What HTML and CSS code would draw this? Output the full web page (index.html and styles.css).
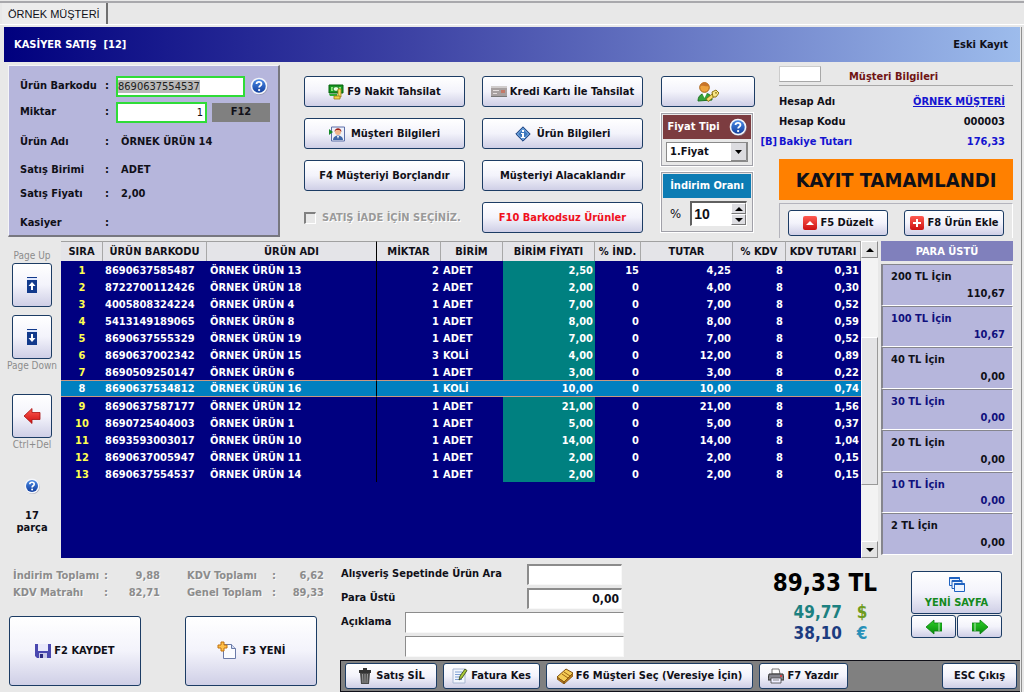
FILE: index.html
```html
<!DOCTYPE html>
<html lang="tr">
<head>
<meta charset="utf-8">
<title>Kasiyer Satış</title>
<link rel="stylesheet" href="styles.css">
</head>
<body>
<svg class="defs" aria-hidden="true">
  <defs>
    <linearGradient id="gBlue" x1="0" y1="0" x2="0" y2="1"><stop offset="0" stop-color="#4b8be6"/><stop offset="1" stop-color="#123f9e"/></linearGradient>
    <linearGradient id="gRed" x1="0" y1="0" x2="0" y2="1"><stop offset="0" stop-color="#ff5a50"/><stop offset="1" stop-color="#cc1010"/></linearGradient>
    <linearGradient id="gGreen" x1="0" y1="0" x2="0" y2="1"><stop offset="0" stop-color="#2cd028"/><stop offset="1" stop-color="#088a0c"/></linearGradient>
    <symbol id="help" viewBox="0 0 16 16"><circle cx="8.6" cy="8.8" r="7.2" fill="#8c8ca0" opacity=".6"/><circle cx="8" cy="8" r="7.4" fill="#f4f6fb"/><circle cx="8" cy="8" r="6" fill="url(#gBlue)"/><path d="M5.8 6.3C5.8 3.6 10.2 3.7 10.2 6.2C10.2 7.8 8.1 7.7 8.1 9.4" fill="none" stroke="#fff" stroke-width="1.6"/><circle cx="8.1" cy="11.6" r="1" fill="#fff"/></symbol>
  </defs>
</svg>
<nav class="tabs"><button class="tab" type="button">ÖRNEK MÜŞTERİ</button></nav>
<div class="window">
  <header class="title"><h1>KASİYER SATIŞ&nbsp; [12]</h1><span>Eski Kayıt</span></header>

  <section class="top">
    <form class="entry">
      <label for="barcode">Ürün Barkodu</label><i>:</i>
      <div class="line"><input id="barcode" class="green barcode" value="8690637554537"><svg class="i18"><use href="#help"/></svg></div>
      <label for="qty">Miktar</label><i>:</i>
      <div class="line"><input id="qty" class="green qty" value="1"><button type="button" class="f12">F12</button></div>
      <span>Ürün Adı</span><i>:</i><output>ÖRNEK ÜRÜN 14</output>
      <span>Satış Birimi</span><i>:</i><output>ADET</output>
      <span>Satış Fiyatı</span><i>:</i><output>2,00</output>
      <span>Kasiyer</span><i>:</i><output></output>
    </form>

    <div class="actions">
      <button type="button" class="btn"><svg class="i16" viewBox="0 0 16 16"><path d="M1 1h14v8H1z" fill="#159a20" stroke="#07600d"/><path d="M3 3h10v4H3z" fill="#8be67c"/><ellipse cx="8" cy="5" rx="3" ry="2.4" fill="#eaffdf" stroke="#0b7a14"/><path d="M1 10h8v2H2z" fill="#2cae32"/><path d="M10 5h3v8h-3z" fill="#f2dd65" stroke="#9c7a10" stroke-width=".8"/><path d="M6 12h6v3H6z" fill="#f0d24c" stroke="#9c7a10" stroke-width=".8"/></svg>F9 Nakit Tahsilat</button>
      <button type="button" class="btn"><svg class="i16" viewBox="0 0 16 16"><path d="M0 2h16v11H0z" fill="#a7a0a0"/><path d="M0 2h16v2H0z" fill="#d0cccc"/><path d="M2 6h6v1H2zM2 9h4v1H2z" fill="#e4dede"/><path d="M10 6h4v3h-4z" fill="#c47868"/><path d="M0 12h16v1H0z" fill="#777"/></svg>Kredi Kartı İle Tahsilat</button>
      <button type="button" class="btn wide"><svg class="i16" viewBox="0 0 16 16"><path d="M2.5 1h13v14h-13z" fill="#eef1fa" stroke="#5c6fa8"/><circle cx="9" cy="6" r="3" fill="#f0b48c"/><path d="M5.500 6c0-5 7-5 7 0l-2-2H7z" fill="#a02018"/><path d="M4 14c0-6 10-6 10 0z" fill="#3f66a8"/><path d="M8 10h2l-1 3z" fill="#fff"/><path d="M0 3l4 3-4 3z" fill="#168a28"/></svg>Müşteri Bilgileri</button>
      <button type="button" class="btn wide"><svg class="i16" viewBox="0 0 16 16"><path d="M8 .8L15.2 8 8 15.2.8 8z" fill="#3c78be" stroke="#1b3f7c"/><path d="M8 2.5L13.5 8 8 13.5 2.5 8z" fill="none" stroke="#9cc4ee" stroke-width=".8"/><path d="M7 4h2v2H7zM6 7h3v4h1v1H6v-1h1V8H6z" fill="#fff"/></svg>Ürün Bilgileri</button>
      <button type="button" class="btn">F4 Müşteriyi Borçlandır</button>
      <button type="button" class="btn">Müşteriyi Alacaklandır</button>
      <label class="refund"><input type="checkbox" disabled>SATIŞ İADE İÇİN SEÇİNİZ.</label>
      <button type="button" class="btn red">F10 Barkodsuz Ürünler</button>
    </div>

    <div class="pricing">
      <button type="button" class="btn" aria-label="Kullanıcı yetkisi"><svg class="i22" viewBox="0 0 22 22"><path d="M1 20c0-10 14-10 14-1z" fill="#37a238" stroke="#1d7422"/><path d="M5 12l2.500 5 2.500-5z" fill="#fff"/><circle cx="7.500" cy="6.500" r="4.800" fill="#eda23d" stroke="#a85f12"/><path d="M3 5C4.500 0 10.500 0 12 5 8.500 6 6.500 4 3 5z" fill="#c8752a"/><path d="M10 19.500l7-6" stroke="#8d7312" stroke-width="4"/><path d="M10.500 19l6-5" stroke="#f6dc6c" stroke-width="2.400"/><path d="M15 11l4-2 3 3-3 4h-3z" fill="#f9e688" stroke="#8d7312"/><circle cx="19" cy="11.800" r=".9" fill="#8d7312"/></svg></button>
      <div class="box brown">
        <label for="ptype">Fiyat Tipi<svg class="i18"><use href="#help"/></svg></label>
        <div class="pick"><select id="ptype"><option>1.Fiyat</option></select><svg class="drop" viewBox="0 0 16 18"><path d="M0 17.500h15.500V0" fill="none" stroke="#888"/><path d="M4 7h7l-3.500 4z"/></svg></div>
      </div>
      <div class="box blue">
        <label for="disc">İndirim Oranı</label>
        <div class="rate"><b>%</b><div class="spin"><input id="disc" value="10"><div class="steps"><button type="button" aria-label="Artır"><svg viewBox="0 0 8 4"><path d="M0 4h8L4 0z"/></svg></button><button type="button" aria-label="Azalt"><svg viewBox="0 0 8 4"><path d="M0 0h8L4 4z"/></svg></button></div></div></div>
      </div>
    </div>

    <div class="customer">
      <div class="chead"><input aria-label="Müşteri kodu"><h2>Müşteri Bilgileri</h2></div>
      <dl>
        <div><dt>Hesap Adı</dt><dd><a href="#">ÖRNEK MÜŞTERİ</a></dd></div>
        <div><dt>Hesap Kodu</dt><dd>000003</dd></div>
        <div class="debt"><dt><span>[B]</span>Bakiye Tutarı</dt><dd>176,33</dd></div>
      </dl>
      <div class="status">KAYIT TAMAMLANDI</div>
      <div class="edit">
        <button type="button" class="btn small"><svg class="i14" viewBox="0 0 14 14"><rect width="14" height="14" rx="2" fill="url(#gRed)"/><path d="M3 9l4-4 4 4z" fill="#fff"/></svg>F5 Düzelt</button>
        <button type="button" class="btn small"><svg class="i14" viewBox="0 0 14 14"><rect width="14" height="14" rx="2" fill="url(#gRed)"/><path d="M6 3h2v3h3v2H8v3H6V8H3V6h3z" fill="#fff"/></svg>F8 Ürün Ekle</button>
      </div>
    </div>
  </section>

  <section class="middle">
    <aside class="side">
      <span>Page Up</span>
      <button type="button" class="btn sq" aria-label="Page Up"><svg class="i16" viewBox="0 0 16 16"><path d="M3 0h10v16H3z" fill="#123a8c"/><path d="M3 1h10v2H3z" fill="#dfe8ff"/><path d="M8 5l3.500 4H9v4H7V9H4.500z" fill="#fff"/></svg></button>
      <button type="button" class="btn sq next" aria-label="Page Down"><svg class="i16" viewBox="0 0 16 16"><path d="M3 0h10v16H3z" fill="#123a8c"/><path d="M3 1h10v2H3z" fill="#dfe8ff"/><path d="M8 13l3.500-4H9V5H7v4H4.500z" fill="#fff"/></svg></button>
      <span>Page Down</span>
      <button type="button" class="btn sq del" aria-label="Sil"><svg class="i18" viewBox="0 0 18 18"><path d="M1 9l8-7.500v4h8v7H9v4z" fill="url(#gRed)" stroke="#a81010" stroke-width=".8"/></svg></button>
      <span>Ctrl+Del</span>
      <svg class="i16 q"><use href="#help"/></svg>
      <strong>17<br>parça</strong>
    </aside>
    <div class="grid">
      <table>
        <colgroup><col class="w1"><col class="w2"><col><col class="w4"><col class="w5"><col class="w6"><col class="w7"><col class="w8"><col class="w9"><col class="w10"></colgroup>
        <thead><tr><th>SIRA</th><th>ÜRÜN BARKODU</th><th>ÜRÜN ADI</th><th>MİKTAR</th><th>BİRİM</th><th>BİRİM FİYATI</th><th>% İND.</th><th>TUTAR</th><th>% KDV</th><th>KDV TUTARI</th></tr></thead>
        <tbody>
          <tr><td>1</td><td>8690637585487</td><td>ÖRNEK ÜRÜN 13</td><td>2</td><td>ADET</td><td>2,50</td><td>15</td><td>4,25</td><td>8</td><td>0,31</td></tr>
          <tr><td>2</td><td>8722700112426</td><td>ÖRNEK ÜRÜN 18</td><td>2</td><td>ADET</td><td>2,00</td><td>0</td><td>4,00</td><td>8</td><td>0,30</td></tr>
          <tr><td>3</td><td>4005808324224</td><td>ÖRNEK ÜRÜN 4</td><td>1</td><td>ADET</td><td>7,00</td><td>0</td><td>7,00</td><td>8</td><td>0,52</td></tr>
          <tr><td>4</td><td>5413149189065</td><td>ÖRNEK ÜRÜN 8</td><td>1</td><td>ADET</td><td>8,00</td><td>0</td><td>8,00</td><td>8</td><td>0,59</td></tr>
          <tr><td>5</td><td>8690637555329</td><td>ÖRNEK ÜRÜN 19</td><td>1</td><td>ADET</td><td>7,00</td><td>0</td><td>7,00</td><td>8</td><td>0,52</td></tr>
          <tr><td>6</td><td>8690637002342</td><td>ÖRNEK ÜRÜN 15</td><td>3</td><td>KOLİ</td><td>4,00</td><td>0</td><td>12,00</td><td>8</td><td>0,89</td></tr>
          <tr><td>7</td><td>8690509250147</td><td>ÖRNEK ÜRÜN 6</td><td>1</td><td>ADET</td><td>3,00</td><td>0</td><td>3,00</td><td>8</td><td>0,22</td></tr>
          <tr class="sel"><td>8</td><td>8690637534812</td><td>ÖRNEK ÜRÜN 16</td><td>1</td><td>KOLİ</td><td>10,00</td><td>0</td><td>10,00</td><td>8</td><td>0,74</td></tr>
          <tr><td>9</td><td>8690637587177</td><td>ÖRNEK ÜRÜN 12</td><td>1</td><td>ADET</td><td>21,00</td><td>0</td><td>21,00</td><td>8</td><td>1,56</td></tr>
          <tr><td>10</td><td>8690725404003</td><td>ÖRNEK ÜRÜN 1</td><td>1</td><td>ADET</td><td>5,00</td><td>0</td><td>5,00</td><td>8</td><td>0,37</td></tr>
          <tr><td>11</td><td>8693593003017</td><td>ÖRNEK ÜRÜN 10</td><td>1</td><td>ADET</td><td>14,00</td><td>0</td><td>14,00</td><td>8</td><td>1,04</td></tr>
          <tr><td>12</td><td>8690637005947</td><td>ÖRNEK ÜRÜN 11</td><td>1</td><td>ADET</td><td>2,00</td><td>0</td><td>2,00</td><td>8</td><td>0,15</td></tr>
          <tr><td>13</td><td>8690637554537</td><td>ÖRNEK ÜRÜN 14</td><td>1</td><td>ADET</td><td>2,00</td><td>0</td><td>2,00</td><td>8</td><td>0,15</td></tr>
        </tbody>
      </table>
    </div>
    <div class="scroll">
      <button type="button" aria-label="Yukarı"><svg viewBox="0 0 8 4"><path d="M0 4h8L4 0z"/></svg></button>
      <div class="track"><div class="thumb"></div></div>
      <button type="button" aria-label="Aşağı"><svg viewBox="0 0 8 4"><path d="M0 0h8L4 4z"/></svg></button>
    </div>
    <aside class="change">
      <h2>PARA ÜSTÜ</h2>
      <ul>
        <li><span>200 TL İçin</span><b>110,67</b></li>
        <li><span>100 TL İçin</span><b>10,67</b></li>
        <li><span>40 TL İçin</span><b>0,00</b></li>
        <li><span>30 TL İçin</span><b>0,00</b></li>
        <li><span>20 TL İçin</span><b>0,00</b></li>
        <li><span>10 TL İçin</span><b>0,00</b></li>
        <li><span>2 TL İçin</span><b>0,00</b></li>
      </ul>
    </aside>
  </section>

  <section class="bottom">
    <div class="left">
      <div class="sums">
        <span>İndirim Toplamı</span><i>:</i><b>9,88</b><span class="second">KDV Toplamı</span><i>:</i><b>6,62</b>
        <span>KDV Matrahı</span><i>:</i><b>82,71</b><span class="second">Genel Toplam</span><i>:</i><b>89,33</b>
      </div>
      <div class="big">
        <button type="button" class="btn"><svg class="i16" viewBox="0 0 16 16"><path d="M0 1h16v14H2l-2-2z" fill="#4a48b0"/><path d="M3 1h10v7H3z" fill="#e9e9fb"/><path d="M4 10h8v5H4z" fill="#c9c9e8"/><path d="M5 11h3v4H5z" fill="#2b2a80"/></svg>F2 KAYDET</button>
        <button type="button" class="btn wide"><svg class="i20" viewBox="0 0 20 20"><path d="M6.500 3.500h8l4 4v10h-12z" fill="#fbfcff" stroke="#6a7aa8"/><path d="M14.500 3.500v4h4" fill="#d4dcf2" stroke="#6a7aa8"/><path d="M4 1h3v3h3v3H7v3H4V7H1V4h3z" fill="#ffc04a" stroke="#c0700c"/></svg>F3 YENİ</button>
      </div>
    </div>
    <div class="right">
      <div class="info">
        <div class="fields">
          <div class="field"><label for="find">Alışveriş Sepetinde Ürün Ara</label><input id="find" class="short"></div>
          <div class="field"><label for="rest">Para Üstü</label><input id="rest" class="short" value="0,00"></div>
          <div class="field note"><label for="note">Açıklama</label><input id="note"></div>
          <div class="field note"><span></span><input aria-label="Açıklama 2"></div>
        </div>
        <div class="totals">
          <strong>89,33 TL</strong>
          <div class="usd"><b>49,77</b><span>$</span></div>
          <div class="eur"><b>38,10</b><span>€</span></div>
        </div>
        <div class="pages">
          <button type="button" class="btn new"><svg class="i16" viewBox="0 0 16 16"><g fill="#eef4ff" stroke="#1f62c0"><path d="M.5 1.500h10v8H.5z"/><path d="M3 4.500h10v8H3z"/><path d="M5.500 7.500h10v8h-10z"/></g><path d="M.5 2h10M3 5h10M5.500 8h10" stroke="#1f62c0" stroke-width="2"/></svg>YENİ SAYFA</button>
          <button type="button" class="btn" aria-label="Önceki sayfa"><svg class="i16" viewBox="0 0 16 16"><path d="M0 8l8-7v3h8v8H8v3z" fill="url(#gGreen)" stroke="#0b7d10" stroke-width=".8"/><path d="M13 4v8" stroke="#dff5df" stroke-width=".8"/></svg></button>
          <button type="button" class="btn" aria-label="Sonraki sayfa"><svg class="i16" viewBox="0 0 16 16"><path d="M16 8L8 1v3H0v8h8v3z" fill="url(#gGreen)" stroke="#0b7d10" stroke-width=".8"/><path d="M3 4v8" stroke="#dff5df" stroke-width=".8"/></svg></button>
        </div>
      </div>
      <footer class="toolbar">
        <button type="button" class="btn t1"><svg class="i16" viewBox="0 0 16 16"><path d="M2 2h12v3H2zM6 0h4v2H6z" fill="#333"/><path d="M3 5h10l-1 11H4z" fill="#4a4a4a"/><path d="M5.500 6l.5 9M8 6v9M10.500 6l-.5 9" stroke="#999"/></svg>Satış SİL</button>
        <button type="button" class="btn t2"><svg class="i16" viewBox="0 0 16 16"><path d="M1 1h12v14H1z" fill="#f2f6fd" stroke="#a9b7d2"/><path d="M3 4h7M3 6.500h6M3 9h5M3 11.500h7" stroke="#7fa0d4"/><path d="M7 12l1-4 5-7 2 1.500-5 7.500z" fill="#a8c838" stroke="#2c3d10" stroke-width=".8"/></svg>Fatura Kes</button>
        <button type="button" class="btn t3"><svg class="i16" viewBox="0 0 16 16"><path d="M0 9l9-8 7 4-9 9z" fill="#f3cc55" stroke="#7d4d0c"/><path d="M0 9l7 5v2l-7-5zM7 14l9-9v3l-9 8z" fill="#b7791c" stroke="#7d4d0c" stroke-width=".7"/><path d="M5 6l6 4M7 4l6 4" stroke="#9b6412"/></svg>F6 Müşteri Seç (Veresiye İçin)</button>
        <button type="button" class="btn t4"><svg class="i16" viewBox="0 0 16 16"><path d="M4 1h7l1 5H4z" fill="#fff" stroke="#555" stroke-width=".8"/><path d="M1 6h14l1 6H0z" fill="#85858d" stroke="#333"/><path d="M3 10h10v5H3z" fill="#eef" stroke="#444" stroke-width=".8"/><path d="M5 12h6" stroke="#888"/><circle cx="13" cy="8" r="1" fill="#e33"/></svg>F7 Yazdır</button>
        <button type="button" class="btn t5">ESC Çıkış</button>
      </footer>
    </div>
  </section>
</div>
<script>
  const barcode = document.getElementById("barcode");
  barcode.focus();
  barcode.select();
</script>
</body>
</html>
```

FILE: styles.css
```css
* { box-sizing: border-box; }
body {
  margin: 0;
  background: #e8e8e8;
  color: #101018;
  font: bold 11px/14px "DejaVu Sans Condensed", Tahoma, "Noto Sans", sans-serif;
}
h1, h2, dl, dd, ul { margin: 0; padding: 0; font-size: 11px; }
i { font-style: normal; }
button, input, select { font: inherit; color: inherit; margin: 0; }
svg { flex: none; }
.defs { position: absolute; width: 0; height: 0; }
.i14 { width: 14px; height: 14px; }
.i16 { width: 16px; height: 16px; }
.i18 { width: 18px; height: 18px; }
.i20 { width: 20px; height: 20px; }
.i22 { width: 22px; height: 22px; }

.tabs { display: flex; height: 24px; border-top: 2px solid #a8a8ac; margin-top: 1px; padding-left: 2px; border-bottom: 1px solid #fff; }
.tab {
  padding: 0 6px;
  border: 0;
  border-right: 2px solid #707070;
  background: #ececec;
  font: 11px/18px "Liberation Sans", Arial, sans-serif;
}
.window { margin: 2px 2px 0 4px; padding-right: 1px; border-right: 1px solid #909090; }
.title {
  display: flex;
  justify-content: space-between;
  align-items: center;
  height: 35px;
  padding: 1px 12px 0 10px;
  background: linear-gradient(90deg, #00007e, #3d42a4 40%, #9dbcec);
}
.title h1 { color: #fff; }

.btn {
  display: flex;
  align-items: center;
  justify-content: center;
  gap: 3px;
  padding: 0;
  border: 1px solid #1c3c64;
  border-radius: 3px;
  background: linear-gradient(#fff, #f3f3fb 50%, #cfcfe6);
  white-space: nowrap;
}
.wide { gap: 6px; }

.top { display: flex; height: 179px; padding: 3px 7px 0 4px; }
.entry {
  display: grid;
  grid-template-columns: 85px 14px 1fr;
  grid-template-rows: 24px 28px 32px 24px 24px 34px;
  align-items: center;
  align-content: start;
  width: 272px;
  height: 172px;
  padding: 8px 4px 0 11px;
  background: #b6b6dc;
  border: 1px solid #f4f4f8;
  border-right: 2px solid #77777f;
  border-bottom: 2px solid #77777f;
}
.entry output { padding-left: 2px; }
.line { display: flex; align-items: center; gap: 5px; margin-left: -3px; }
.green { border: 2px solid #2fdc38; background: #fff; outline: 0; padding: 0; font-weight: normal; }
.green::selection { background: #b8b8b8; color: #202020; }
.barcode { width: 129px; height: 21px; }
.qty { width: 91px; height: 21px; padding-right: 2px; text-align: right; }
.f12 { width: 58px; height: 19px; padding: 0; border: 0; background: #808080; }

.actions {
  display: grid;
  grid-template-columns: 161px 161px;
  grid-auto-rows: 31px;
  gap: 11px 17px;
  margin: 11px 18px 0 24px;
}
.red { color: #f0101c; }
.refund { display: flex; align-items: center; gap: 6px; color: #9a9a9a; text-shadow: 1px 1px #fff; white-space: nowrap; }
.refund input { appearance: none; width: 12px; height: 12px; margin: 0; background: #e8e8e8; border: 1px solid #fff; border-top: 2px solid #808080; border-left: 2px solid #808080; }

.pricing { width: 94px; margin-top: 11px; }
.pricing .btn { width: 94px; height: 31px; }
.box { width: 92px; border: 1px solid #a0a0a8; padding: 1px; outline: 1px solid #fff; }
.box label { display: flex; align-items: center; justify-content: center; gap: 9px; height: 24px; color: #fff; }
.brown { height: 53px; margin-top: 6px; }
.brown label { background: #7c3c40; }
.blue { height: 60px; margin-top: 6px; }
.blue label { background: #0c7cb4; }
.pick { position: relative; margin: 3px 3px 0; }
.pick select { appearance: none; display: block; width: 100%; height: 20px; padding: 0 0 0 3px; border: 1px solid #8a8a8a; border-radius: 0; background: #fff; }
.drop { position: absolute; right: 1px; top: 1px; width: 16px; height: 18px; background: #dcdce0; pointer-events: none; }
.rate { display: flex; align-items: center; gap: 9px; padding: 3px 4px 0 7px; }
.rate > b { font-size: 13px; font-weight: normal; }
.spin { display: flex; flex: 1; min-width: 0; height: 25px; border: 1px solid #fff; border-top: 2px solid #606060; border-left: 2px solid #606060; background: #fff; }
.spin input { flex: 1; width: 0; min-width: 0; padding: 0 0 0 2px; border: 0; background: #fff; font: bold 14px "Liberation Sans", sans-serif; }
.steps { display: flex; flex-direction: column; width: 15px; }
.steps button { display: flex; align-items: center; justify-content: center; flex: 1; padding: 0; border: 1px solid #777; border-top-color: #fff; border-left-color: #fff; background: #dedee2; }
.steps svg, .scroll svg { width: 8px; height: 4px; }

.customer { flex: 1; margin-left: 24px; }
.chead { display: flex; height: 21px; border-bottom: 1px solid #a8a8a8; }
.chead input { width: 42px; height: 16px; border: 1px solid #a8a8a8; border-top-color: #ccc; border-left-color: #ccc; background: #fff; padding: 0; margin-top: 1px; }
.chead h2 { margin: 5px 0 0 28px; color: #701414; }
dl { padding: 7px 8px 0 0; }
dl > div { display: flex; justify-content: space-between; height: 20px; line-height: 18px; }
dt { position: relative; }
dt span { position: absolute; right: 100%; padding-right: 2px; }
.debt, dl a { color: #1414d0; }
.status { display: flex; align-items: center; justify-content: center; height: 41px; margin-top: 6px; background: #ff8000; font-size: 20px; white-space: nowrap; }
.edit { display: flex; justify-content: space-between; margin-top: 3px; padding: 6px 8px 0; height: 35px; border: 1px solid #b4b4bc; border-bottom: 0; border-right-color: #fff; }
.small { width: 100px; height: 26px; gap: 4px; }

.middle { display: flex; height: 317px; padding: 0 7px 0 4px; }
.side { display: flex; flex-direction: column; align-items: center; width: 48px; padding-top: 8px; margin-right: 5px; color: #8c8c8c; }
.side span { font-weight: normal; font-size: 10px; white-space: nowrap; line-height: 14px; }
.side strong { margin-top: 16px; text-align: center; color: #101018; line-height: 12px; }
.sq { width: 40px; height: 44px; }
.next { margin-top: 8px; }
.del { margin-top: 21px; }
.q { margin-top: 26px; }
.grid { flex: 1; background: #000080; }
table { width: 100%; table-layout: fixed; border-collapse: separate; border-spacing: 0; color: #fff; }
.w1 { width: 42px; } .w2 { width: 104px; } .w4 { width: 64px; } .w5 { width: 62px; } .w6 { width: 92px; }
.w7 { width: 46px; } .w8 { width: 92px; } .w9 { width: 53px; } .w10 { width: 75px; }
th { height: 20px; padding: 1px 0 0; background: #e4e4e8; color: #101018; border-top: 1px solid #a0a0a0; border-right: 1px solid #a8a8a8; white-space: nowrap; }
th:nth-child(3) { border-right-color: #000; }
td { height: 17px; padding: 1px 2px 0; text-align: right; line-height: 15px; white-space: nowrap; }
td:nth-child(1) { text-align: center; color: #ffff50; }
td:nth-child(2), td:nth-child(3), td:nth-child(5) { text-align: left; }
td:nth-child(3) { padding-left: 3px; border-right: 1px solid #000; }
td:nth-child(9) { padding-right: 3px; }
td:nth-child(6) { background: #008080; }
.sel td { padding-top: 0; }
.sel td, .sel td:nth-child(6) { background: #0080c0; border-top: 1px solid #c89880; border-bottom: 1px solid #c89880; }
.sel td:nth-child(1) { color: #fff; }
.scroll { display: flex; flex-direction: column; width: 17px; }
.scroll button { display: flex; align-items: center; justify-content: center; height: 17px; padding: 0; border: 1px solid #8c8c8c; border-top-color: #fff; border-left-color: #fff; background: #e4e4e4; }
.track { flex: 1; background: #f3f3f3; padding-top: 79px; }
.thumb { height: 148px; background: #e4e4e6; border: 1px solid #999; border-top-color: #fff; border-left-color: #fff; }
.change { display: flex; flex-direction: column; width: 132px; margin-left: 3px; padding-bottom: 3px; }
.change h2 { height: 20px; line-height: 22px; background: #8080bc; color: #fff; text-align: center; }
.change ul { flex: 1; display: flex; flex-direction: column; margin-top: 3px; list-style: none; }
.change li { flex: 1; display: flex; flex-direction: column; justify-content: space-between; padding: 5px 7px 4px 8px; background: #b6b6dc; border: 1px solid #fff; border-top-color: #85858d; border-left: 2px solid #85858d; }
.change li b { text-align: right; }
.change li:nth-child(2n) { color: #10107c; }

.bottom { display: flex; }
.left { width: 336px; padding: 11px 0 0 5px; }
.sums { display: grid; grid-template-columns: 91px 10px 46px 112px 10px 42px; row-gap: 3px; padding-left: 4px; color: #8c8c8c; text-shadow: 1px 1px #f8f8f8; white-space: nowrap; }
.sums b { text-align: right; }
.sums .second { padding-left: 27px; }
.big { display: flex; gap: 44px; margin-top: 16px; }
.big .btn { width: 132px; height: 70px; }
.right { flex: 1; display: flex; flex-direction: column; }
.info { display: flex; height: 102px; }
.fields { width: 284px; padding: 4px 0 0 1px; }
.field { display: flex; justify-content: space-between; align-items: center; height: 24px; padding-right: 2px; }
.field input { width: 95px; height: 21px; padding: 0 2px; text-align: right; border: 1px solid #f8f8f8; border-top: 2px solid #8c8c8c; border-left: 2px solid #8c8c8c; background: #fff; font-size: 12px; }
.field.note { padding: 0; }
.note input { width: 219px; text-align: left; border-top-width: 1px; border-left-width: 1px; }
.totals { flex: 1; padding: 11px 34px 0 0; text-align: right; }
.totals strong { display: block; color: #000; font-size: 24px; line-height: 28px; }
.totals div { display: flex; justify-content: flex-end; gap: 14px; font-size: 17px; line-height: 20px; padding-right: 9px; }
.totals div:nth-child(2) { padding-top: 5px; height: 26px; }
.totals span { width: 12px; text-align: center; }
.usd { color: #1c8080; }
.usd span { color: #6f9c20; }
.eur { color: #1c3c80; }
.eur span { color: #2890b8; }
.pages { display: grid; grid-template-columns: 1fr 1fr; grid-template-rows: 43px 23px; gap: 1px; width: 91px; margin: 13px 18px 0 0; align-content: start; }
.new { grid-column: 1 / 3; flex-direction: column; gap: 4px; color: #148a1c; }
.toolbar { display: flex; gap: 6px; height: 32px; padding: 2px 3px 2px 4px; background: #808080; border: 1px solid #101018; border-right: 0; }
.toolbar .btn { height: 26px; }
.t1 { width: 92px; } .t2 { width: 97px; } .t3 { width: 207px; } .t4 { width: 89px; }
.t5 { width: 75px; margin-left: auto; }
```
